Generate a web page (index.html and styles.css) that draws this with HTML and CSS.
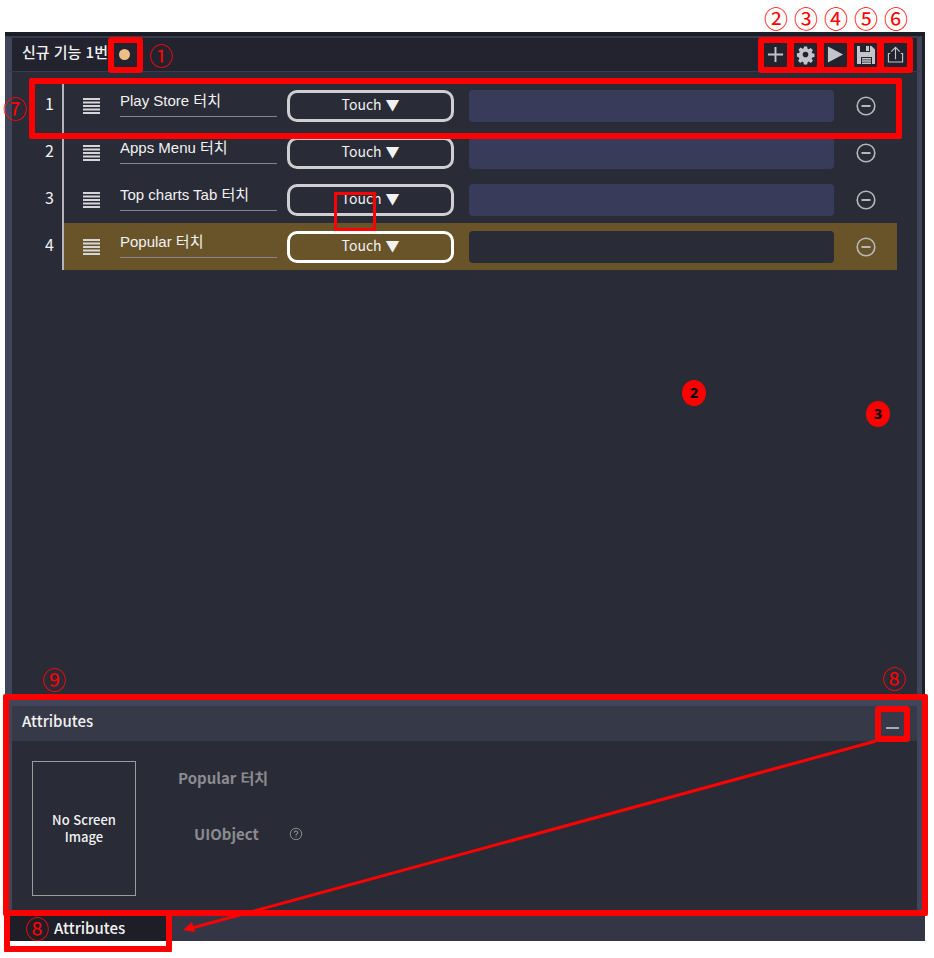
FILE: index.html
```html
<!DOCTYPE html>
<html lang="ko">
<head>
<meta charset="utf-8">
<meta name="viewport" content="width=device-width, initial-scale=1">
<title>신규 기능 1번</title>
<link rel="stylesheet" href="styles.css">
</head>
<body>
<div class="app">
  <div class="workspace">
    <header class="titlebar">
      <h1 class="title">신규 기능 1번</h1>
      <div class="status framed"><span class="status-dot"></span></div>
      <span class="callout">①</span>
      <div class="toolbar">
        <div class="tool"><span class="callout callout-above">②</span>
          <button class="tool-button framed" type="button" aria-label="Add"><svg width="17" height="17" viewBox="0 0 18 18"><path d="M9 1v16M1 9h16" stroke="currentColor" stroke-width="2" fill="none"/></svg></button></div>
        <div class="tool"><span class="callout callout-above">③</span>
          <button class="tool-button framed" type="button" aria-label="Settings"><svg width="17" height="17" viewBox="0 0 18 18"><path fill="currentColor" fill-rule="evenodd" d="M7.3 0.5h3.4l.5 2.4 1.3.6 2.1-1.4 2.3 2.3-1.4 2.1.6 1.3 2.4.5v3.4l-2.4.5-.6 1.3 1.4 2.1-2.3 2.3-2.1-1.4-1.3.6-.5 2.4H7.300l-.5-2.400-1.300-.6-2.100 1.400-2.300-2.300 1.400-2.100-.6-1.300L-.1 11.200V7.800l2.400-.5.6-1.300-1.400-2.100 2.300-2.300 2.100 1.400 1.300-.6zM9 6a3 3 0 1 0 0 6 3 3 0 0 0 0-6z"/></svg></button></div>
        <div class="tool"><span class="callout callout-above">④</span>
          <button class="tool-button framed" type="button" aria-label="Play"><svg width="17" height="17" viewBox="0 0 18 18"><path d="M1 0.500L17 9 1 17.500z" fill="currentColor"/></svg></button></div>
        <div class="tool"><span class="callout callout-above">⑤</span>
          <button class="tool-button framed" type="button" aria-label="Save"><svg width="18" height="18" viewBox="0 0 18 18"><path fill="currentColor" fill-rule="evenodd" d="M0 0h3v6h10V0h1.500L18 3.500V18h-3v-7H4v7H0zM9 0h3v5H9zM5 12h9v1.500H5zM5 14.300h9v1.400H5zM5 16.500h9V18H5z"/></svg></button></div>
        <div class="tool"><span class="callout callout-above">⑥</span>
          <button class="tool-button framed" type="button" aria-label="Export"><svg width="17" height="17" viewBox="0 0 18 18"><path d="M9 14V2M4.500 6L9 1.500 13.500 6M3.500 8H1.500V17h15V8H14.500" stroke="currentColor" stroke-width="1.200" fill="none"/></svg></button></div>
      </div>
    </header>

    <main class="canvas">
      <ol class="steps">
        <li class="step step-framed">
          <span class="callout callout-side">⑦</span>
          <span class="number">1</span>
          <div class="step-body">
            <svg class="grip" width="17" height="16" viewBox="0 0 17 16"><path d="M0 1h17M0 4.500h17M0 8h17M0 11.500h17M0 15h17" stroke="currentColor" stroke-width="2"/></svg>
            <input class="name" type="text" value="Play Store 터치" aria-label="Step 1 name">
            <select class="action" aria-label="Step 1 action"><option>Touch ▼</option></select>
            <input class="value" type="text" aria-label="Step 1 value">
            <button class="remove" type="button" aria-label="Remove step 1"><svg width="20" height="20" viewBox="0 0 20 20"><circle cx="10" cy="10" r="8.800" stroke="currentColor" stroke-width="1.600" fill="none"/><path d="M5.500 10h9" stroke="currentColor" stroke-width="2"/></svg></button>
          </div>
        </li>
        <li class="step">
          <span class="number">2</span>
          <div class="step-body">
            <svg class="grip" width="17" height="16" viewBox="0 0 17 16"><path d="M0 1h17M0 4.500h17M0 8h17M0 11.500h17M0 15h17" stroke="currentColor" stroke-width="2"/></svg>
            <input class="name" type="text" value="Apps Menu 터치" aria-label="Step 2 name">
            <select class="action" aria-label="Step 2 action"><option>Touch ▼</option></select>
            <input class="value" type="text" aria-label="Step 2 value">
            <button class="remove" type="button" aria-label="Remove step 2"><svg width="20" height="20" viewBox="0 0 20 20"><circle cx="10" cy="10" r="8.800" stroke="currentColor" stroke-width="1.600" fill="none"/><path d="M5.500 10h9" stroke="currentColor" stroke-width="2"/></svg></button>
          </div>
        </li>
        <li class="step">
          <span class="number">3</span>
          <div class="step-body">
            <svg class="grip" width="17" height="16" viewBox="0 0 17 16"><path d="M0 1h17M0 4.500h17M0 8h17M0 11.500h17M0 15h17" stroke="currentColor" stroke-width="2"/></svg>
            <input class="name" type="text" value="Top charts Tab 터치" aria-label="Step 3 name">
            <select class="action" aria-label="Step 3 action"><option>Touch ▼</option></select>
            <input class="value" type="text" aria-label="Step 3 value">
            <button class="remove" type="button" aria-label="Remove step 3"><svg width="20" height="20" viewBox="0 0 20 20"><circle cx="10" cy="10" r="8.800" stroke="currentColor" stroke-width="1.600" fill="none"/><path d="M5.500 10h9" stroke="currentColor" stroke-width="2"/></svg></button>
            <span class="marker"></span>
          </div>
        </li>
        <li class="step selected">
          <span class="number">4</span>
          <div class="step-body">
            <svg class="grip" width="17" height="16" viewBox="0 0 17 16"><path d="M0 1h17M0 4.500h17M0 8h17M0 11.500h17M0 15h17" stroke="currentColor" stroke-width="2"/></svg>
            <input class="name" type="text" value="Popular 터치" aria-label="Step 4 name">
            <select class="action" aria-label="Step 4 action"><option>Touch ▼</option></select>
            <input class="value" type="text" aria-label="Step 4 value">
            <button class="remove" type="button" aria-label="Remove step 4"><svg width="20" height="20" viewBox="0 0 20 20"><circle cx="10" cy="10" r="8.800" stroke="currentColor" stroke-width="1.600" fill="none"/><path d="M5.500 10h9" stroke="currentColor" stroke-width="2"/></svg></button>
          </div>
        </li>
      </ol>
      <span class="pin pin-two">2</span>
      <span class="pin pin-three">3</span>
      <span class="callout callout-panel">⑨</span>
      <span class="callout callout-minimize">⑧</span>
    </main>

    <section class="panel">
      <header class="panel-head">
        <h2 class="panel-title">Attributes</h2>
        <button class="minimize framed" type="button" aria-label="Minimize"><span class="minimize-bar"></span></button>
      </header>
      <div class="panel-body">
        <div class="preview">No Screen Image</div>
        <div class="details">
          <p class="detail-name">Popular 터치</p>
          <p class="detail-type">UIObject
            <svg width="14" height="14" viewBox="0 0 14 14"><circle cx="7" cy="7" r="5.700" stroke="currentColor" fill="none"/><path d="M5.200 5.600a1.800 1.600 0 1 1 2.600 1.500Q7 7.500 7 8.500M7 9.400v1.200" stroke="currentColor" stroke-width="1.100" fill="none"/></svg>
          </p>
        </div>
      </div>
    </section>
  </div>

  <footer class="dock">
    <div class="tab-slot">
      <button class="tab" type="button">Attributes</button>
      <span class="callout callout-tab">⑧</span>
    </div>
    <svg class="arrow" viewBox="0 0 694 192" preserveAspectRatio="none"><path d="M693 1L9 188" stroke="#f00" stroke-width="3"/><path d="M0 190l9-8 3 10z" fill="#f00"/></svg>
  </footer>
</div>
</body>
</html>
```

FILE: styles.css
```css
* { box-sizing: border-box; }

:root {
  --red: #f00;
  --canvas: #292b36;
  --rail: #40455a;
  --ui: "Noto Sans CJK KR", "Noto Sans", sans-serif;
}

body {
  margin: 0;
  background: #fff;
  color: #f2f2f2;
  font: 15px/20px var(--ui);
}

h1, h2, p, ol { margin: 0; padding: 0; }
button, input, select { margin: 0; padding: 0; border: 0; font: inherit; color: inherit; }
svg { display: block; flex: none; overflow: visible; }

.app {
  display: flex;
  flex-direction: column;
  min-height: calc(100vh - 49px);
  margin: 32px 9px 17px 5px;
}

.workspace {
  flex: 1;
  display: flex;
  flex-direction: column;
  border-top: 4px solid #1b1d27;
  border-right: 3px solid #1f2029;
  background: var(--canvas);
}

/* Title bar */
.titlebar {
  display: flex;
  align-items: center;
  height: 36px;
  padding: 0 10px;
  border: solid #373b4c;
  border-width: 2px 5px 1px 7px;
  border-left-color: var(--rail);
  border-right-color: var(--rail);
  background: #22232e;
}

.title {
  font: 500 15px/24px var(--ui);
  padding-bottom: 6px;
  white-space: nowrap;
}

.framed { border-radius: 1px; box-shadow: 0 0 0 6px var(--red); position: relative; }

.status {
  display: flex;
  align-items: center;
  justify-content: center;
  width: 23px;
  height: 24px;
  margin: 0 12px 0 6px;
  padding-right: 2px;
}

.status-dot {
  width: 11px;
  height: 11px;
  border-radius: 50%;
  background: #efbd86;
}

.callout {
  color: var(--red);
  font: 24px/24px var(--ui);
  width: 24px;
  z-index: 2;
}

.toolbar { display: flex; gap: 7px; margin-left: auto; }
.tool { position: relative; }

.tool-button {
  display: flex;
  align-items: center;
  justify-content: center;
  width: 23px;
  height: 24px;
  background: #22232e;
  color: #c4c5ca;
}

.callout-above { position: absolute; left: 0; bottom: 37px; }

/* Steps */
.canvas {
  position: relative;
  flex: 1;
  padding: 10px 20px 20px 20px;
  border: solid var(--rail);
  border-width: 0 5px 0 7px;
}

.steps { list-style: none; }
.step { position: relative; display: flex; height: 47px; }

.number {
  width: 30px;
  padding-right: 8px;
  text-align: right;
  font-size: 16px;
  line-height: 43px;
}

.step-body {
  position: relative;
  flex: 1;
  display: flex;
  align-items: center;
  border-left: 2px solid #b4b4b8;
  padding: 0 21px 0 19px;
}

.grip { color: #d6d6da; }

.name {
  align-self: flex-start;
  width: 157px;
  height: 28px;
  margin: 7px 10px 0 20px;
  border-bottom: 1px solid #858690;
  background: none;
  font: 15px/20px "Liberation Sans", "Noto Sans CJK KR", sans-serif;
  padding-bottom: 6px;
}

.action {
  appearance: none;
  width: 167px;
  height: 32px;
  margin-right: 15px;
  padding-bottom: 3px;
  border: 3px solid #cfcfd1;
  border-radius: 10px;
  background: none;
  font-size: 14px;
  text-align: center;
  text-align-last: center;
}

.value {
  flex: 1;
  min-width: 0;
  height: 32px;
  margin-right: 22px;
  border-radius: 4px;
  background: #393b5a;
}

.remove { background: none; color: #b8b8bc; }

.selected .step-body { background: #69542a; }
.selected .action { border-color: #fff; }
.selected .value { background: var(--canvas); }

/* Review marks */
.step-framed::after {
  content: "";
  position: absolute;
  z-index: 1;
  inset: -4px -5px -10px -3px;
  border: 6px solid var(--red);
  border-radius: 2px;
  pointer-events: none;
}

.callout-side { position: absolute; left: -29px; top: 14px; }

.marker {
  position: absolute;
  left: 270px;
  top: 16px;
  width: 42px;
  height: 39px;
  border: 3px solid var(--red);
  z-index: 1;
}

.pin {
  position: absolute;
  width: 24px;
  height: 26px;
  border-radius: 50%;
  background: var(--red);
  color: #000;
  font: 800 14px/26px "Noto Sans", sans-serif;
  text-align: center;
}

.pin-two { right: 211px; top: 308px; }
.pin-three { right: 27px; top: 329px; }
.callout-panel { position: absolute; left: 30px; bottom: 3px; }
.callout-minimize { position: absolute; right: 11px; bottom: 4px; }

/* Attributes panel */
.panel {
  position: relative;
  border: solid var(--rail);
  border-width: 12px 5px 0 7px;
}

.panel::after {
  content: "";
  position: absolute;
  inset: -12px -11px 0 -9px;
  border: 6px solid var(--red);
  border-radius: 2px;
  pointer-events: none;
}

.panel-head {
  display: flex;
  align-items: center;
  justify-content: space-between;
  height: 35px;
  padding: 0 13px 0 10px;
  background: #363947;
}

.panel-title { font: 500 15px/20px var(--ui); padding-bottom: 6px; }

.minimize {
  width: 23px;
  height: 24px;
  background: #363947;
  display: flex;
  justify-content: center;
  align-items: flex-end;
  padding-bottom: 7px;
}

.minimize-bar { width: 13px; height: 2px; background: #aaabb2; }

.panel-body {
  display: flex;
  gap: 42px;
  min-height: 175px;
  padding: 20px;
}

.preview {
  display: flex;
  align-items: center;
  justify-content: center;
  width: 104px;
  height: 135px;
  padding: 0 16px 2px;
  border: 1px solid #9a9a9f;
  text-align: center;
  font: 500 13px/17px var(--ui);
}

.details { color: #8b8b90; font: 700 15px/24px var(--ui); padding-top: 5px; }
.detail-type { display: flex; align-items: center; gap: 30px; margin-top: 32px; padding-left: 16px; }

/* Dock */
.dock {
  position: relative;
  display: flex;
  height: 25px;
  background: #343646;
}

.tab-slot { position: relative; width: 167px; }

.tab-slot::after {
  content: "";
  position: absolute;
  inset: -6px 0 -11px -1px;
  border: 6px solid var(--red);
  border-radius: 1px;
  pointer-events: none;
}

.tab {
  width: 100%;
  height: 25px;
  padding: 0 0 1px 49px;
  background: #1d1e28;
  text-align: left;
  font-weight: 500;
}

.callout-tab { position: absolute; left: 20px; top: 0; }

.arrow {
  position: absolute;
  left: 178px;
  bottom: 9px;
  width: calc(100% - 226px);
  height: 192px;
}
```
